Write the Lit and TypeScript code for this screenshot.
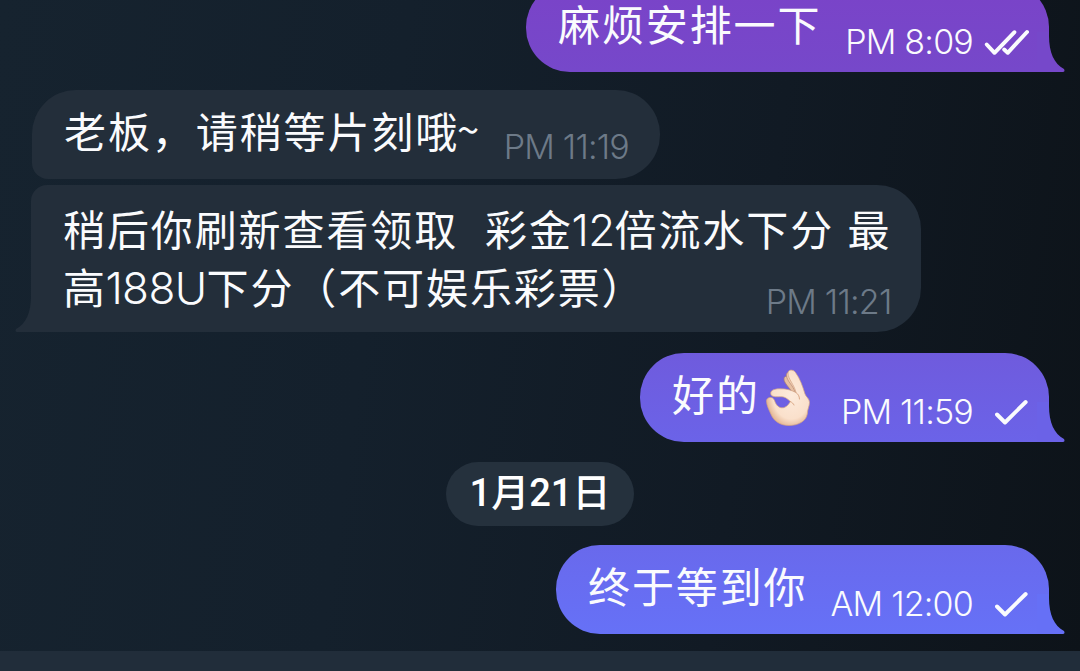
import { LitElement, css, html, nothing, svg } from 'lit'
import { customElement, property } from 'lit/decorators.js'
import { classMap } from 'lit/directives/class-map.js'
import { styleMap } from 'lit/directives/style-map.js'

type Side = "in" | "out";
type Status = "sent" | "read";

interface Message {
  side: Side;
  lines: string[];
  time: string;
  width: number;
  status?: Status;
  tail?: boolean;
  emoji?: boolean;
  tone?: string;
}

@customElement("chat-ticks")
export class ChatTicks extends LitElement {
  @property({ type: String })
  status: Status = "sent";

  render() {
    return html`
      <svg width="48" height="28" viewBox="0 0 48 28" fill="none" stroke="currentColor"
        stroke-width="3.9" stroke-linecap="round" stroke-linejoin="round">
        ${this.status === "read"
          ? svg`<path d="M5.700 15.500l7.800 8.300L33.500 3.200" /><path d="M23.200 20.500l3.500 3.300L46 3" />`
          : svg`<path d="M16 15.500l8 8L44.700 3" />`}
      </svg>
    `;
  }

  static styles = css`
    :host {
      display: block;
      width: 48px;
      height: 28px;
    }
    svg {
      display: block;
    }
  `;
}

@customElement("ok-hand")
export class OkHand extends LitElement {
  render() {
    return html`
      <svg width="46" height="58" viewBox="0 0 46 58" role="img" aria-label="👌🏻">
        <defs>
          <radialGradient id="skin" cx="58%" cy="45%" r="62%">
            <stop offset="0" stop-color="#fdebdc" />
            <stop offset="0.7" stop-color="#fae0cb" />
            <stop offset="1" stop-color="#dfae8a" />
          </radialGradient>
        </defs>
        <path fill="#e6bfa2" stroke="#a9806f" stroke-width="0.7"
          d="M19 10C19 7 21.500 6.500 23 9L33 23L27 23C24 18 19 14 19 10z" />
        <path fill="#efcdb4" stroke="#b98a72" stroke-width="0.7"
          d="M21.500 6C21.500 2.500 25 2.500 27 6L37 24L30 23C28 16 21.500 12 21.500 6z" />
        <path fill="url(#skin)" stroke="#d3a483" stroke-width="0.7"
          d="M23 4C23 0.500 28 0 30.500 3.500C35 9.500 37.500 17 40 25C41 28 44.500 29.500 44.500 33.500
             C44.500 37 42.500 40 42.300 45C41 52.500 33 56.500 24 56.500C15 56.500 9 52 6.300 46
             C4 41 1.500 36 1.500 32C1.500 28 7.500 27 9.300 31C10.500 34 11.500 37 15 38.500
             C20 40 23.500 36 25.300 32.500C22 29 19 27.500 15.500 27.700C11 28 6 28 5.700 24.500
             C5.500 21 10 20 14 19.800C21 19.500 26 21 31 23.500C29.500 16 23 10 23 4z" />
        <path fill="none" stroke="#dba987" stroke-width="1" stroke-linecap="round"
          d="M31 23.500C33 25 34.500 27 34.500 30M25.300 32.500C27 33.500 28.500 34.500 29 36" />
      </svg>
    `;
  }

  static styles = css`
    :host,
    svg {
      display: block;
    }
  `;
}

@customElement("chat-bubble")
export class ChatBubble extends LitElement {
  @property({ attribute: false })
  message!: Message;

  // Latin runs are set in a different face and spacing than the Han text
  renderRun(run: string) {
    if (run === "~") return html`<span class="tilde">~</span>`;
    return /^[0-9A-Z]+$/.test(run) ? html`<span class="latin">${run}</span>` : run;
  }

  renderLine(line: string) {
    return line.split(/([0-9A-Z]+|~)/).filter(Boolean).map(run => this.renderRun(run));
  }

  render() {
    const { side, lines, time, width, status, tail, emoji, tone } = this.message;
    const classes = { bubble: true, [side]: true, tail: !!tail, multi: lines.length > 1 };
    return html`
      <div class=${classMap(classes)} style=${styleMap({ width: `${width}px`, "--tone": tone })}>
        <div class="content">
          <div class="text">
            ${lines.map(line => html`<div class="line">${this.renderLine(line)}</div>`)}
          </div>
          ${emoji ? html`<ok-hand class="emoji"></ok-hand>` : nothing}
        </div>
        <div class="meta">
          <span class="time">${time}</span>
          ${status ? html`<chat-ticks .status=${status}></chat-ticks>` : nothing}
        </div>
        ${tail ? html`
          <svg class="tip" width="28" height="40" viewBox="0 0 28 40">
            <path d="M0 0H12V4C12 20 17 32 27 37Q28.500 40 25.500 40H0z" />
          </svg>` : nothing}
      </div>
    `;
  }

  static styles = css`
    .bubble {
      position: relative;
      box-sizing: border-box;
      display: grid;
      grid-template: 1fr / 1fr;
      height: 89px;
      padding: 11px 31px 0 32px;
      border-radius: 44px;
      color: #fafbfd;
      background: #232e3a;
    }
    .bubble.in {
      border-bottom-left-radius: 16px;
    }
    .bubble.multi {
      height: 147px;
      padding-top: 14px;
      border-top-left-radius: 16px;
    }
    .bubble.in.tail {
      border-bottom-left-radius: 0;
    }
    .bubble.out {
      padding-right: 20px;
      border-bottom-right-radius: 0;
      background: var(--tone);
    }

    .content,
    .meta {
      grid-area: 1 / 1;
      display: flex;
    }
    .text {
      font: 400 42px/58px "Noto Sans CJK SC", sans-serif;
      letter-spacing: 1.9px;
      word-spacing: 2.2px;
    }
    .line {
      height: 58px;
      white-space: pre;
    }
    .latin {
      margin-left: -1.5px;
      font: 350 44px/1 Inter, sans-serif;
      letter-spacing: -0.6px;
    }
    .tilde {
      position: relative;
      top: -3px;
      margin-left: -2px;
      font-size: 40px;
      line-height: 1;
    }
    .emoji {
      margin: 5px 0 0 5px;
    }

    .meta {
      place-self: end;
      align-items: flex-end;
      padding-bottom: 10px;
      font: 350 34px/40px Inter, sans-serif;
      letter-spacing: -0.8px;
      white-space: nowrap;
    }
    .in .meta {
      color: #6d7a88;
    }
    .in:not(.tail) .meta {
      padding-bottom: 12px;
    }
    chat-ticks {
      margin: 0 0 5px 8px;
    }

    .tip {
      position: absolute;
      right: -16px;
      bottom: 0;
      fill: #232e3a;
    }
    .out .tip {
      fill: var(--tip-out);
    }
    .in .tip {
      right: auto;
      left: -16px;
      transform: scaleX(-1);
    }
  `;
}

@customElement("app-root")
export class AppRoot extends LitElement {
  earlier: Message[] = [
    { side: "out", lines: ["麻烦安排一下"], time: "PM 8:09", width: 523, status: "read", tail: true, tone: "linear-gradient(#7a43c8, #7648ca)" },
    { side: "in", lines: ["老板，请稍等片刻哦~"], time: "PM 11:19", width: 628 },
    { side: "in", lines: ["稍后你刷新查看领取  彩金12倍流水下分 最", "高188U下分（不可娱乐彩票）"], time: "PM 11:21", width: 890, tail: true },
    { side: "out", lines: ["好的"], time: "PM 11:59", width: 409, status: "sent", tail: true, emoji: true, tone: "linear-gradient(#6f5bdd, #6b63e8)" },
  ];

  today: Message[] = [
    { side: "out", lines: ["终于等到你"], time: "AM 12:00", width: 493, status: "sent", tail: true, tone: "linear-gradient(#6969ec, #6671f7)" },
  ];

  render() {
    return html`
      <main class="chat">
        ${this.earlier.map((m, i) => html`<chat-bubble class="row ${m.side} m${i}" .message=${m}></chat-bubble>`)}
        <div class="date">1月21日</div>
        ${this.today.map(m => html`<chat-bubble class="row ${m.side} last" .message=${m}></chat-bubble>`)}
      </main>
      <footer class="composer"></footer>
    `;
  }

  static styles = css`
    :host {
      display: flex;
      flex-direction: column;
      width: 1080px;
      height: 671px;
      overflow: hidden;
      background: linear-gradient(98deg, #16232f 0%, #14202c 35%, #111a24 68%, #0d1319 100%);
    }
    .chat {
      display: flex;
      flex-direction: column;
      height: 651px;
    }
    .row {
      display: block;
      flex: none;
    }
    .row.in {
      align-self: flex-start;
      margin-left: 31px;
    }
    .row.out {
      align-self: flex-end;
      margin-right: 31px;
    }
    .m0 {
      margin-top: -17px;
      --tip-out: #7648ca;
    }
    .m1 {
      margin-top: 18px;
    }
    .row.m1 {
      margin-left: 32px;
    }
    .m2 {
      margin-top: 6px;
    }
    .m3 {
      margin-top: 21px;
      --tip-out: #6b62e7;
    }
    .last {
      margin-top: 19px;
      --tip-out: #6670f6;
    }

    .date {
      flex: none;
      align-self: center;
      box-sizing: border-box;
      width: 188px;
      height: 64px;
      margin-top: 20px;
      border-radius: 32px;
      text-align: center;
      color: #fff;
      background: #25313d;
      font: 500 38px/62px Roboto, "Noto Sans CJK SC", sans-serif;
    }
    .composer {
      flex: none;
      height: 20px;
      background: #212d3a;
    }
  `;
}

declare global {
  interface HTMLElementTagNameMap {
    "app-root": AppRoot,
    "chat-bubble": ChatBubble,
    "chat-ticks": ChatTicks,
    "ok-hand": OkHand,
  }
}
